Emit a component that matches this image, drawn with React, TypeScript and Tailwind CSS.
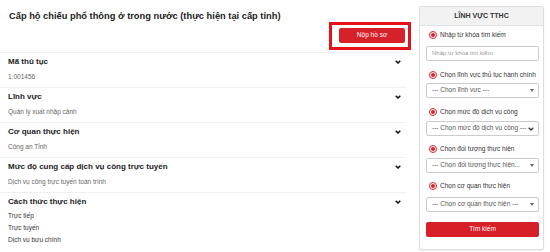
import React from "react";

const sections = [
  { title: "Mã thủ tục", values: ["1.001456"] },
  { title: "Lĩnh vực", values: ["Quản lý xuất nhập cảnh"] },
  { title: "Cơ quan thực hiện", values: ["Công an Tỉnh"] },
  { title: "Mức độ cung cấp dịch vụ công trực tuyến", values: ["Dịch vụ công trực tuyến toàn trình"] },
];

function Chevron() {
  return (
    <svg width="6" height="4" viewBox="0 0 6 4" className="shrink-0 mr-[1px]">
      <polyline points="0.7,0.7 3,3 5.3,0.7" fill="none" stroke="#111" strokeWidth="1.5" />
    </svg>
  );
}

function Caret() {
  return (
    <svg width="4" height="3" viewBox="0 0 4 3" className="shrink-0">
      <polygon points="0,0 4,0 2,3" fill="#666" />
    </svg>
  );
}

function Radio({ label }: { label: string }) {
  return (
    <div className="flex items-center h-[10px] pl-[3px]">
      <span className="w-[8px] h-[8px] rounded-full border border-[#d9232d] bg-white flex items-center justify-center">
        <span className="w-[3.5px] h-[3.5px] rounded-full bg-[#d9232d]" />
      </span>
      <span className="ml-[3px] text-[6.5px] text-[#333] leading-[10px]">{label}</span>
    </div>
  );
}

function Select({ text, chevron }: { text: string; chevron?: boolean }) {
  return (
    <div className="h-[15px] border border-[#ccc] rounded-[2px] flex items-center justify-between pl-[5px] pr-[4px] bg-white">
      <span className="text-[6.5px] text-[#555] leading-none">{text}</span>
      {chevron ? (
        <svg width="6" height="4" viewBox="0 0 6 4">
          <polyline points="0.7,0.7 3,3 5.3,0.7" fill="none" stroke="#333" strokeWidth="1.3" />
        </svg>
      ) : (
        <Caret />
      )}
    </div>
  );
}

export default function App() {
  return (
    <div className="w-[550px] h-[252px] bg-white flex overflow-hidden" style={{ fontFamily: '"Liberation Sans", Arial, sans-serif' }}>
      <div className="w-[411px] shrink-0 flex flex-col">
        <h1 className="pt-[10px] pl-[9px] h-[22px] text-[9.3px] leading-[12px] font-bold text-[#222]">
          Cấp hộ chiếu phổ thông ở trong nước (thực hiện tại cấp tỉnh)
        </h1>
        <div className="flex justify-end">
          <div className="h-[28px] w-[82px] border-[3px] border-[#e5121c] pt-[3px] pb-[4px] pl-[7px] pr-[3px]">
            <button className="w-full h-full bg-[#d6202a] rounded-[2px] text-white text-[6.5px] leading-none flex items-center justify-center">
              Nộp hồ sơ
            </button>
          </div>
        </div>
        <div className="w-[406px] mt-[2px]">
          {sections.map((s) => (
            <div key={s.title} className="border-t border-[#f0f0f0] pt-[4px] pb-[5px] pl-[8px] pr-[4px]">
              <div className="flex items-center justify-between h-[10px]">
                <span className="text-[8px] font-bold text-[#222] leading-[10px]">{s.title}</span>
                <Chevron />
              </div>
              <div className="mt-[5px] h-[10px] text-[6.5px] leading-[10px] text-[#666]">{s.values[0]}</div>
            </div>
          ))}
          <div className="border-t border-[#f0f0f0] pt-[4px] pl-[8px] pr-[4px]">
            <div className="flex items-center justify-between h-[10px]">
              <span className="text-[8px] font-bold text-[#222] leading-[10px]">Cách thức thực hiện</span>
              <Chevron />
            </div>
            <div className="mt-[3px] text-[6.5px] leading-[12px] text-[#333]">
              <div>Trực tiếp</div>
              <div>Trực tuyến</div>
              <div>Dịch vụ bưu chính</div>
            </div>
          </div>
        </div>
      </div>

      <div className="ml-[8px] mt-[6px] w-[125px] h-[244px] shrink-0 border border-[#dddddd] rounded-[2px] shadow-[0_1px_2px_rgba(0,0,0,0.08)] flex flex-col">
        <div className="h-[19px] bg-[#f2f2f2] border-b border-[#e2e2e2] flex items-center justify-center text-[7px] font-bold text-[#333]">
          LĨNH VỰC TTHC
        </div>
        <div className="pl-[6px] pr-[4px] pt-[4px] flex flex-col">
          <Radio label="Nhập từ khóa tìm kiếm" />
          <div className="mt-[6px] h-[15px] border border-[#ccc] rounded-[2px] flex items-center pl-[5px] text-[6px] text-[#999]">
            Nhập từ khóa tìm kiếm
          </div>
          <div className="mt-[9px]"><Radio label="Chọn lĩnh vực thủ tục hành chính" /></div>
          <div className="mt-[3px]"><Select text="--- Chọn lĩnh vực ---" /></div>
          <div className="mt-[9px]"><Radio label="Chọn mức độ dịch vụ công" /></div>
          <div className="mt-[4px]"><Select text="--- Chọn mức độ dịch vụ công ---" chevron /></div>
          <div className="mt-[8px]"><Radio label="Chọn đối tượng thực hiện" /></div>
          <div className="mt-[4px]"><Select text="--- Chọn đối tượng thực hiện..." /></div>
          <div className="mt-[8px]"><Radio label="Chọn cơ quan thực hiện" /></div>
          <div className="mt-[6px]"><Select text="--- Chọn cơ quan thực hiện ---" /></div>
          <button className="mt-[10px] h-[15px] bg-[#d71f27] rounded-[2px] text-white text-[6.5px] leading-none flex items-center justify-center">
            Tìm kiếm
          </button>
        </div>
      </div>
    </div>
  );
}
